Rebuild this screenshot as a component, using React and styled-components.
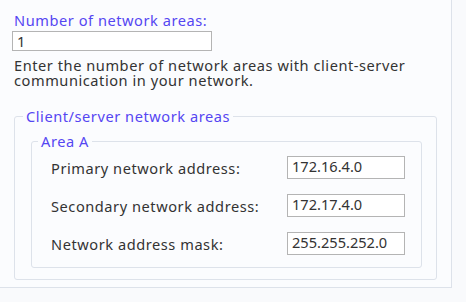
import React from "react";
import styled, { createGlobalStyle } from "styled-components";

const GlobalStyle = createGlobalStyle`
  body {
    margin: 0;
    background: #f9fafc;
    font-family: "Noto Sans", "Open Sans", sans-serif;
  }
`;

const Panel = styled.div`
  box-sizing: border-box;
  width: 452px;
  height: 288px;
  padding: 11px 0 0 12px;
  background: #fbfcfe;
  border-right: 1px solid #dde2ea;
  border-bottom: 1px solid #dde2ea;
  font-size: 14.6px;
  letter-spacing: 0.55px;
  color: #333;
`;

const Heading = styled.div`
  padding-left: 2px;
  line-height: 18px;
  color: #5546f2;
`;

const CountInput = styled.input`
  box-sizing: border-box;
  display: block;
  width: 200px;
  height: 20px;
  margin-top: 2px;
  padding: 0 4px;
  border: 1px solid #b4b4b4;
  background: #fff;
  font: inherit;
  color: #333;
`;

const Hint = styled.p`
  margin: 7px 0 0;
  padding-left: 2px;
  line-height: 15px;
  width: 425px;
`;

const Group = styled.fieldset`
  box-sizing: border-box;
  width: ${(p) => p.$width}px;
  margin: ${(p) => p.$margin};
  padding: ${(p) => p.$padding};
  border: 1px solid #dde2ea;
  border-radius: 3px;
  min-width: 0;
`;

const Legend = styled.legend`
  margin-left: ${(p) => p.$offset}px;
  padding: 0 3px;
  line-height: 18px;
  color: #5546f2;
`;

const Rows = styled.div`
  display: grid;
  grid-template-columns: 1fr 118px;
  row-gap: 15px;
  align-items: center;
`;

const Label = styled.span`
  line-height: 18px;
`;

const AddressInput = styled.input`
  box-sizing: border-box;
  width: 118px;
  height: 23px;
  padding: 0 4px 3px;
  border: 1px solid #b4b4b4;
  background: #fff;
  font: inherit;
  color: #333;
`;

const areas = [
  { label: "Primary network address:", value: "172.16.4.0" },
  { label: "Secondary network address:", value: "172.17.4.0" },
  { label: "Network address mask:", value: "255.255.252.0" },
];

export default function App() {
  return (
    <>
      <GlobalStyle />
      <Panel>
        <Heading>Number of network areas:</Heading>
        <CountInput defaultValue="1" />
        <Hint>
          Enter the number of network areas with client-server communication in
          your network.
        </Hint>
        <Group $width={423} $margin="19px 0 0 2px" $padding="7px 14px 11px 16px">
          <Legend $offset={-8}>Client/server network areas</Legend>
          <Group $width={391} $margin="0" $padding="6px 16px 12px 19px">
            <Legend $offset={-13}>Area A</Legend>
            <Rows>
              {areas.map((a) => (
                <React.Fragment key={a.label}>
                  <Label>{a.label}</Label>
                  <AddressInput defaultValue={a.value} />
                </React.Fragment>
              ))}
            </Rows>
          </Group>
        </Group>
      </Panel>
    </>
  );
}
